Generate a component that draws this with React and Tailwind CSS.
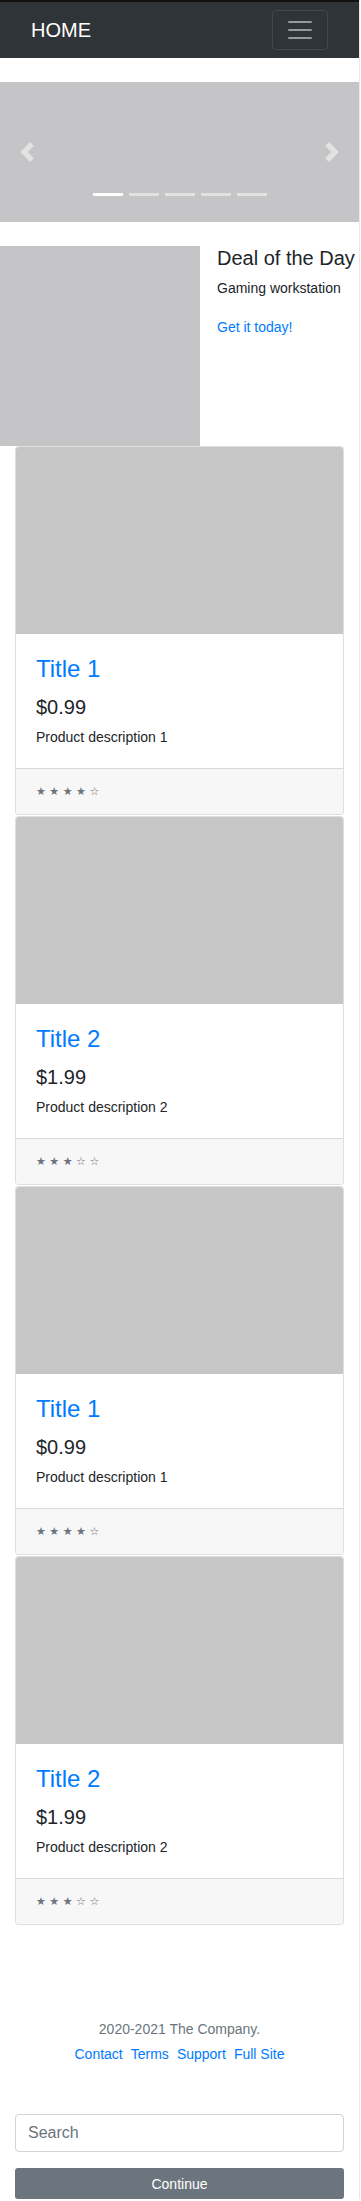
import React from 'react';

const products = [
  { title: 'Title 1', price: '$0.99', desc: 'Product description 1', stars: 4 },
  { title: 'Title 2', price: '$1.99', desc: 'Product description 2', stars: 3 },
  { title: 'Title 1', price: '$0.99', desc: 'Product description 1', stars: 4 },
  { title: 'Title 2', price: '$1.99', desc: 'Product description 2', stars: 3 },
];

function ProductCard({ p }) {
  return (
    <div className="mb-px overflow-hidden rounded border border-black/[.125] bg-white">
      <div className="h-[187px] bg-[#c6c6c6]" />
      <div className="p-5">
        <h4 className="mb-3 text-[24px] leading-[29px] text-[#007bff]">{p.title}</h4>
        <h5 className="mb-2 text-[20px] leading-6">{p.price}</h5>
        <p className="text-sm leading-[21px]">{p.desc}</p>
      </div>
      {/* stars need DejaVu, Liberation has no ★ */}
      <div
        className="h-[46px] border-t border-black/[.125] bg-[#f7f7f7] px-5 py-3 text-[11px] leading-[21px] text-[#6c757d]"
        style={{ fontFamily: '"DejaVu Sans", sans-serif' }}
      >
        {'★ '.repeat(p.stars)}
        {'☆ '.repeat(5 - p.stars).trim()}
      </div>
    </div>
  );
}

export default function App() {
  return (
    <div className="w-[361px] bg-white text-[#212529]" style={{ fontFamily: '"Liberation Sans", Arial, sans-serif' }}>
      <div className="w-[360px] border-r border-[#e8e8e8]">
        <div className="h-[2px] bg-[#111]" />

        {/* navbar */}
        <nav className="flex items-center justify-between bg-[#2f3438] px-[31px] py-2">
          <a className="text-[20px] leading-[30px] text-white">HOME</a>
          <button className="flex h-10 w-14 items-center justify-center rounded border border-white/10">
            <svg width="30" height="30" viewBox="0 0 30 30">
              <path d="M4 7h22M4 15h22M4 23h22" stroke="rgba(255,255,255,0.5)" strokeWidth="2" strokeLinecap="round" />
            </svg>
          </button>
        </nav>

        {/* carousel */}
        <div className="relative mt-6 h-[140px] bg-[#c5c5c7]">
          <div className="absolute inset-y-0 left-0 flex w-[54px] items-center justify-center opacity-50">
            <svg width="20" height="20" viewBox="0 0 8 8" fill="#fff">
              <path d="M5.25 0l-4 4 4 4 1.5-1.5L4.25 4l2.5-2.5L5.25 0z" />
            </svg>
          </div>
          <div className="absolute inset-y-0 right-0 flex w-[54px] items-center justify-center opacity-50">
            <svg width="20" height="20" viewBox="0 0 8 8" fill="#fff">
              <path d="M2.75 0l-1.5 1.5L3.75 4l-2.5 2.5L2.75 8l4-4-4-4z" />
            </svg>
          </div>
          <div className="absolute inset-x-0 bottom-[26px] flex justify-center gap-[6px]">
            <span className="h-[3px] w-[30px] bg-white" />
            <span className="h-[3px] w-[30px] bg-white/50" />
            <span className="h-[3px] w-[30px] bg-white/50" />
            <span className="h-[3px] w-[30px] bg-white/50" />
            <span className="h-[3px] w-[30px] bg-white/50" />
          </div>
        </div>

        {/* deal of the day */}
        <div className="mt-6 flex">
          <div className="h-[200px] w-[200px] shrink-0 bg-[#c5c5c7]" />
          <div className="pl-[17px]">
            <h5 className="mb-2 text-[20px] leading-6">Deal of the Day</h5>
            <p className="mb-4 text-sm leading-[21px]">Gaming workstation</p>
            <a className="text-sm leading-[21px] text-[#007bff]">Get it today!</a>
          </div>
        </div>

        {/* products */}
        <div className="px-[15px]">
          {products.map((p, i) => (
            <ProductCard key={i} p={p} />
          ))}
        </div>

        {/* footer */}
        <footer className="mt-[94px] text-center text-sm leading-[21px]">
          <div className="text-[#6c757d]">2020-2021 The Company.</div>
          <div className="mt-1 flex justify-center gap-2 text-[#007bff]">
            <a>Contact</a>
            <a>Terms</a>
            <a>Support</a>
            <a>Full Site</a>
          </div>
        </footer>

        <div className="mt-[49px] px-[15px]">
          <input
            placeholder="Search"
            className="block h-[38px] w-full rounded border border-[#ced4da] px-3 text-base text-[#495057] placeholder-[#6c757d] focus:outline-none"
          />
          <button className="mt-4 block h-[31px] w-full rounded-[3px] bg-[#6c757d] text-sm text-white">Continue</button>
        </div>
      </div>
    </div>
  );
}
